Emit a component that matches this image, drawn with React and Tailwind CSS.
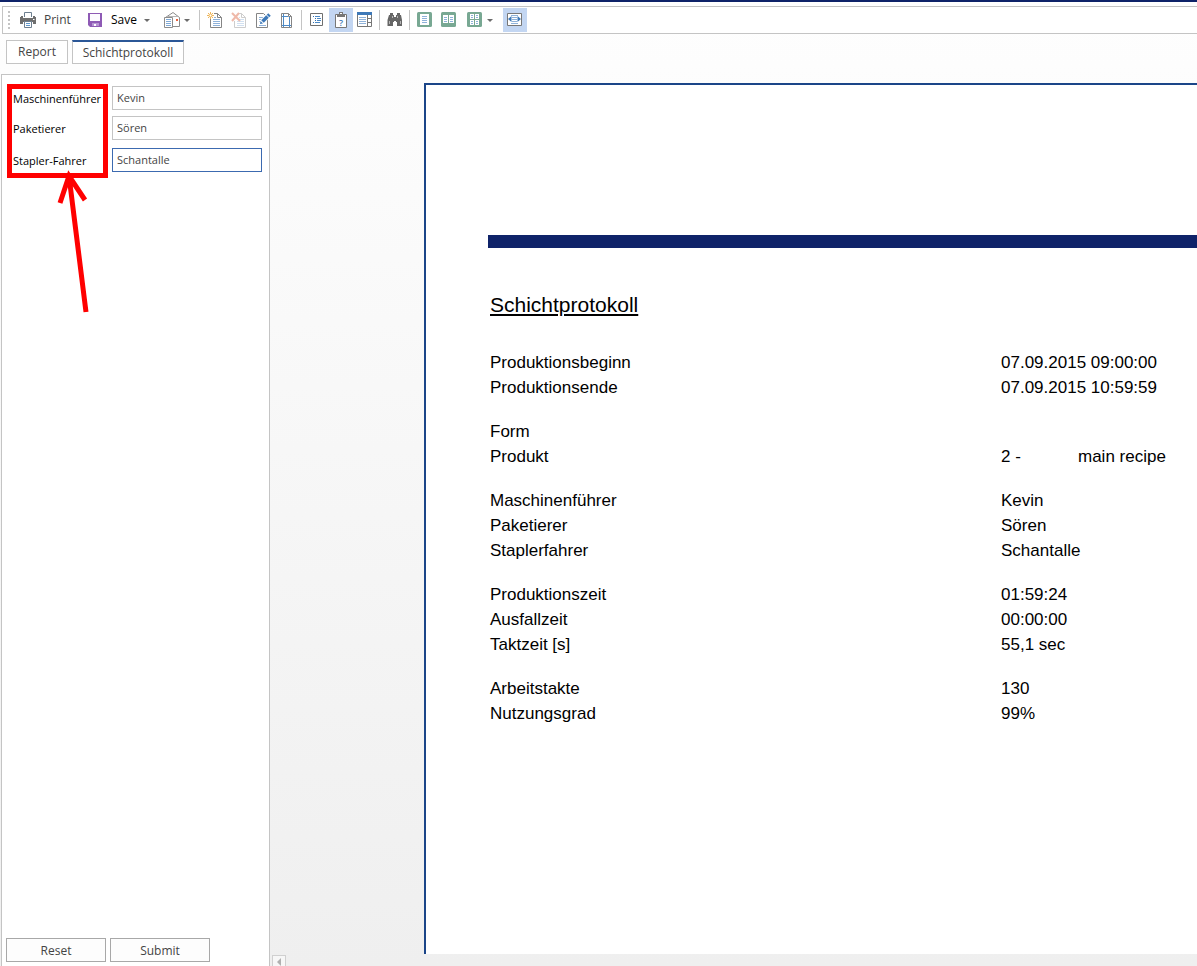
import { useState } from 'react';
import clsx from 'clsx';

const reportGroups = [
  [
    { label: 'Produktionsbeginn', value: '07.09.2015 09:00:00' },
    { label: 'Produktionsende', value: '07.09.2015 10:59:59' }
  ],
  [
    { label: 'Form', value: '' },
    { label: 'Produkt', value: '2 -', extra: 'main recipe' }
  ],
  [
    { label: 'Maschinenführer', value: 'Kevin' },
    { label: 'Paketierer', value: 'Sören' },
    { label: 'Staplerfahrer', value: 'Schantalle' }
  ],
  [
    { label: 'Produktionszeit', value: '01:59:24' },
    { label: 'Ausfallzeit', value: '00:00:00' },
    { label: 'Taktzeit [s]', value: '55,1 sec' }
  ],
  [
    { label: 'Arbeitstakte', value: '130' },
    { label: 'Nutzungsgrad', value: '99%' }
  ]
];

const initialValues = { operator: 'Kevin', packer: 'Sören', driver: 'Schantalle' };

/* ---------- Icons ---------- */

const Icon = ({ children, className }) => (
  <svg width="16" height="16" viewBox="0 0 16 16" fill="none" className={clsx('shrink-0', className)} aria-hidden="true">
    {children}
  </svg>
);

const PrintIcon = () => (
  <Icon>
    <path d="M4.5 5V.5h7V5" fill="#fff" stroke="#6d7f90" />
    <path d="M0 5h3v1.5h10V5h3v7h-3v-2H3v2H0z" fill="#6f6f6f" />
    <path d="M1 4h2v2H1zM13 4h2v2h-2zM1 11h2v1H1zM13 11h2v1h-2z" fill="#6f6f6f" />
    <path d="M0 6h16v4H0z" fill="#6f6f6f" />
    <path d="M13 7h1.5v1H13z" fill="#fff" />
    <path d="M4.5 9.5h7v6h-7z" fill="#fff" stroke="#6d7f90" />
    <path d="M6 11.5h4M6 13.5h4" stroke="#5f97cc" />
  </Icon>
);

const SaveIcon = () => (
  <Icon>
    <path d="M1 1h14v14H3l-2-2z" fill="#8e5ab5" />
    <path d="M3 2h10v7H3z" fill="#fdfbff" />
    <path d="M5 11h7v3H9v-2H7v2H5z" fill="#b795d3" />
    <path d="M7 12h2v2H7z" fill="#fdfbff" />
  </Icon>
);

const MailIcon = () => (
  <Icon>
    <path d="M1.5 5.500 9 .5l6.500 5v9h-7" fill="#fff" stroke="#8c8c8c" />
    <path d="M3.500 4.500h11" stroke="#b5b5b5" />
    <path d="M.5 5.500h8v10h-8z" fill="#fff" stroke="#8c8c8c" />
    <path d="M2 7.500h5M2 9.500h5M2 11.500h5M2 13.500h5" stroke="#7fa9d6" />
    <path d="M12 7h2v2h-2z" fill="#e8603c" />
  </Icon>
);

const Sheet = () => (
  <>
    <path d="M3.500 1.500h7l4 4v10h-11z" fill="#fff" stroke="#858585" />
    <path d="M10.500 1.500v4h4" stroke="#858585" />
    <path d="M6 5.500h3M6 7.500h7M6 9.500h7M6 11.500h7M6 13.500h7" stroke="#8fb2da" />
  </>
);

const NewIcon = () => (
  <Icon>
    <Sheet />
    <path d="M0 0h7v6H0z" fill="#fff" />
    <path d="M3.500 0v7M0 3.500h7M1 1l5 5M6 1 1 6" stroke="#efb75c" />
    <circle cx="3.500" cy="3.500" r="1.500" fill="#fff" stroke="#efb75c" />
  </Icon>
);

const DeleteIcon = () => (
  <Icon className="opacity-40">
    <Sheet />
    <path d="M0 0h8v9H0z" fill="#fff" />
    <path d="m1 1 8 8M8 1 1 9" stroke="#d9532c" strokeWidth="2" />
  </Icon>
);

const EditIcon = () => (
  <Icon>
    <path d="M1.500 1.500h7l4 4v10h-11z" fill="#fff" stroke="#858585" />
    <path d="M4 5.500h4M4 7.500h4M4 9.500h3M4 13.500h7" stroke="#8fb2da" />
    <path d="m6 11 9-9" stroke="#fff" strokeWidth="5" />
    <path d="m7.500 9.500 5-5" stroke="#3d78b8" strokeWidth="3.500" />
    <path d="m13 4 1.500-1.500" stroke="#3d78b8" strokeWidth="3.500" />
    <path d="m5 12 .5-3L8 11.500z" fill="#3d78b8" />
  </Icon>
);

const PageSetupIcon = () => (
  <Icon>
    <path d="M2.500 1.500h7l3 3v11h-10z" fill="#fff" stroke="#858585" />
    <path d="M9.500 1.500v3h3" stroke="#858585" />
    <path d="M4.500 2v13M10.500 5v10M3 4.500h6M3 13.500h9" stroke="#4d8ac6" />
  </Icon>
);

const BookmarksIcon = () => (
  <Icon>
    <path d="M1.500 1.500h12v12h-12z" fill="#fff" stroke="#6f6f6f" />
    <path d="M4 4.500h1M4 10.500h1M6 6.500h1M6 8.500h1" stroke="#2f6fb3" />
    <path d="M6 4.500h5M8 6.500h4M8 8.500h4M6 10.500h5" stroke="#4d8ac6" />
  </Icon>
);

const ParametersIcon = () => (
  <Icon>
    <path d="M2.500 2.500h11v13h-11z" fill="#fff" stroke="#777" />
    <path d="M4 2h2V0h4v2h2v3H4z" fill="#777" />
    <path d="M7 1h2v1H7z" fill="#fff" />
    <text x="8" y="14" textAnchor="middle" fontSize="9" fontWeight="600" fontFamily="Open Sans, sans-serif" fill="#3d78b8">?</text>
  </Icon>
);

const ThumbnailsIcon = () => (
  <Icon>
    <path d="M.5 2.500h14v12H.5z" fill="#fff" stroke="#777" />
    <path d="M0 0h15v3H0z" fill="#3d78b8" />
    <path d="M2 5.500h7M2 7.500h7M2 9.500h7M2 11.500h7" stroke="#8fb2da" />
    <path d="M10.500 3v11M10 6.500h5M10 10.500h5" stroke="#777" />
  </Icon>
);

const FindIcon = () => (
  <Icon>
    <path d="M3 1h3v2h1v2h2V3h1V1h3v2h1l1 5v6h-5v-4H9v-1H7v1H6v4H.5V8L2 3h1z" fill="#666" />
    <path d="M2.500 9v3M13.500 9v3M5.500 4v2M10.500 4v2" stroke="#b5b5b5" />
  </Icon>
);

const SinglePageIcon = () => (
  <Icon>
    <rect width="15" height="15" rx="1.500" fill="#78a893" />
    <path d="M3 2h9v11H3z" fill="#fff" />
    <path d="M5 4.500h5M5 6.500h5M5 8.500h5M5 10.500h5" stroke="#8fb2da" />
  </Icon>
);

const ContinuousIcon = () => (
  <Icon>
    <rect width="15" height="15" rx="1.500" fill="#78a893" />
    <path d="M2 3h5v8H2zM8 3h5v8H8z" fill="#fff" />
    <path d="M3 5.500h3M3 7.500h3M3 9.500h3M9 5.500h3M9 7.500h3M9 9.500h3" stroke="#8fb2da" />
  </Icon>
);

const MultiPageIcon = () => (
  <Icon>
    <rect width="15" height="15" rx="1.500" fill="#78a893" />
    <path d="M3 2h4v5H3zM8 2h4v5H8zM3 8h4v5H3zM8 8h4v5H8z" fill="#fff" />
    <path d="M4 3.500h2M4 5.500h2M9 3.500h2M9 5.500h2M4 9.500h2M4 11.500h2M9 9.500h2M9 11.500h2" stroke="#8fb2da" />
  </Icon>
);

const FitWidthIcon = () => (
  <Icon>
    <path d="M.5 1.500h14v12H.5z" fill="#fff" stroke="#777" />
    <path d="M4 3.500h7M5 5.500h5M5 7.500h5M5 9.500h5M4 11.500h7" stroke="#8fb2da" />
    <path d="M1 7 4.500 4v6zM14 7l-3.500-3v6z" fill="#3d78b8" />
  </Icon>
);

/* ---------- Toolbar ---------- */

const ToolButton = ({ label, active, onClick, children }) => (
  <button
    type="button"
    aria-label={label}
    title={label}
    aria-pressed={active}
    onClick={onClick}
    className={clsx('flex h-6 w-6 items-center pl-1', active && 'bg-[#c3d6f2]')}
  >
    {children}
  </button>
);

const CaretButton = ({ label }) => (
  <button type="button" aria-label={label} className="flex h-6 w-3.5 items-center justify-center">
    <svg width="6" height="3" viewBox="0 0 6 3" aria-hidden="true">
      <path d="M0 0h6L3 3z" fill="#6b6b6b" />
    </svg>
  </button>
);

const Separator = () => <span className="mr-[3px] ml-0.5 h-5 w-px shrink-0 bg-[#c4c4c4]" />;

const Toolbar = ({ showParameters, onToggleParameters }) => (
  <div className="bg-white pt-1 pl-0.5">
    <div className="flex h-7 items-center border-y border-l border-[#c4c4c4]">
      <span className="mr-1.5 ml-[5px] h-[18px] border-l-2 border-dotted border-[#c4c4c4]" />
      <button type="button" className="flex h-6 w-[67px] items-center gap-2 pl-1">
        <PrintIcon />
        Print
      </button>
      <button type="button" className="flex h-6 w-[57px] items-center gap-2 pl-1 text-black">
        <SaveIcon />
        Save
      </button>
      <CaretButton label="Save options" />
      <div className="mr-[3px] ml-1.5 flex">
        <button type="button" aria-label="Send E-Mail" className="flex h-6 w-5 items-center pl-1">
          <MailIcon />
        </button>
        <CaretButton label="Send options" />
      </div>
      <Separator />
      <ToolButton label="New page"><NewIcon /></ToolButton>
      <ToolButton label="Delete page"><DeleteIcon /></ToolButton>
      <ToolButton label="Edit page"><EditIcon /></ToolButton>
      <ToolButton label="Page setup"><PageSetupIcon /></ToolButton>
      <Separator />
      <ToolButton label="Bookmarks"><BookmarksIcon /></ToolButton>
      <ToolButton label="Parameters" active={showParameters} onClick={onToggleParameters}><ParametersIcon /></ToolButton>
      <ToolButton label="Thumbnails"><ThumbnailsIcon /></ToolButton>
      <Separator />
      <ToolButton label="Find"><FindIcon /></ToolButton>
      <Separator />
      <ToolButton label="Single page"><SinglePageIcon /></ToolButton>
      <ToolButton label="Continuous"><ContinuousIcon /></ToolButton>
      <div className="ml-0.5 flex">
        <button type="button" aria-label="Multiple pages" className="flex h-6 w-5 items-center pl-1">
          <MultiPageIcon />
        </button>
        <CaretButton label="Multiple pages options" />
      </div>
      <span className="w-1.5" />
      <ToolButton label="Page width" active><FitWidthIcon /></ToolButton>
    </div>
  </div>
);

/* ---------- Parameter panel ---------- */

const Field = ({ id, label, value, onChange, active }) => (
  <div className="flex h-6 items-center">
    <label htmlFor={id} className="w-[99px] shrink-0 pt-0.5 text-[11px] whitespace-nowrap text-black">{label}</label>
    <input
      id={id}
      type="text"
      value={value}
      onChange={(e) => onChange(id, e.target.value)}
      className={clsx(
        'h-6 w-[150px] border bg-white px-1 pb-0.5 text-[11px] outline-none focus:border-[#3c6ab0]',
        active ? 'border-[#3c6ab0]' : 'border-[#c4c4c4]'
      )}
    />
  </div>
);

// Red frame around the labels with an arrow pointing at it
const LabelMarker = () => (
  <svg
    width="102"
    height="230"
    viewBox="0 0 102 230"
    fill="none"
    stroke="#ff0000"
    strokeWidth="5"
    className="pointer-events-none absolute top-[9px] left-[5px]"
    aria-hidden="true"
  >
    <rect x="2.500" y="2.500" width="96" height="89" />
    <path d="m62 92 17 136M53 119l9-27 16 24" />
  </svg>
);

const ParameterPanel = () => {
  const [values, setValues] = useState(initialValues);

  const handleChange = (key, value) => {
    setValues(prev => ({ ...prev, [key]: value }));
  };

  return (
    <form
      className="relative ml-px flex w-[269px] shrink-0 flex-col border border-b-0 border-[#c4c4c4] bg-white"
      onSubmit={(e) => e.preventDefault()}
    >
      <div className="flex-1 pt-[11px] pl-[11px]">
        <Field id="operator" label="Maschinenführer" value={values.operator} onChange={handleChange} />
        <div className="mt-1.5">
          <Field id="packer" label="Paketierer" value={values.packer} onChange={handleChange} />
        </div>
        <div className="mt-2">
          <Field id="driver" label="Stapler-Fahrer" value={values.driver} onChange={handleChange} active />
        </div>
      </div>
      <LabelMarker />
      <div className="flex gap-1 pb-1 pl-1">
        <button type="button" onClick={() => setValues(initialValues)} className="h-6 w-[100px] border border-[#a8a8a8] bg-[#fdfdfd] pt-px">
          Reset
        </button>
        <button type="submit" className="h-6 w-[100px] border border-[#a8a8a8] bg-[#fdfdfd] pt-px">
          Submit
        </button>
      </div>
    </form>
  );
};

/* ---------- Report page ---------- */

const ReportPage = () => (
  <article className="mb-3 ml-[152px] min-w-0 flex-1 overflow-hidden border-t-2 border-l-2 border-[#1b4588] bg-white pt-[150px] pl-[62px] font-['Liberation_Sans',Arial,sans-serif] text-black">
    <div className="h-[13px] bg-[#0f2369]" />
    <div className="pl-0.5">
      <h1 className="mt-11 text-[21px] leading-[26px] underline underline-offset-2">Schichtprotokoll</h1>
      <table className="mt-8 w-full table-fixed text-left text-[17px] leading-[25px]">
        <colgroup>
          <col className="w-[511px]" />
          <col />
        </colgroup>
        {reportGroups.map((group, groupIndex) => (
          <tbody key={groupIndex}>
            {group.map((row, index) => {
              const spacing = index === 0 && groupIndex > 0 ? 'pt-[19px]' : 'pt-0';
              return (
                <tr key={row.label}>
                  <th scope="row" className={clsx('px-0 pb-0 font-normal', spacing)}>{row.label}</th>
                  <td className={clsx('px-0 pb-0 whitespace-nowrap', spacing)}>
                    {row.extra ? (
                      <span className="flex">
                        <span className="w-[77px]">{row.value}</span>
                        <span>{row.extra}</span>
                      </span>
                    ) : row.value}
                  </td>
                </tr>
              );
            })}
          </tbody>
        ))}
      </table>
    </div>
  </article>
);

const App = () => {
  const [tab, setTab] = useState('Schichtprotokoll');
  const [showParameters, setShowParameters] = useState(true);

  return (
    <div className="flex min-h-screen flex-col overflow-hidden border-t-2 border-[#0f2369] bg-linear-to-b from-[#fefefe] to-[#efefef] font-['Open_Sans','Noto_Sans',sans-serif] text-xs text-[#444444]">
      <Toolbar showParameters={showParameters} onToggleParameters={() => setShowParameters(!showParameters)} />

      <nav className="mt-1.5 mb-2.5 flex gap-1 pl-1.5">
        <button
          type="button"
          onClick={() => setTab('Report')}
          className={clsx('h-6 w-[62px] border border-[#c4c4c4] bg-white', tab === 'Report' && 'border-t-2 border-t-[#2b5797]')}
        >
          Report
        </button>
        <button
          type="button"
          onClick={() => setTab('Schichtprotokoll')}
          className={clsx('h-6 w-28 border border-[#c4c4c4] bg-white', tab === 'Schichtprotokoll' && 'border-t-2 border-t-[#2b5797]')}
        >
          Schichtprotokoll
        </button>
      </nav>

      <div className="flex flex-1">
        {showParameters && <ParameterPanel />}
        <main className="relative flex min-w-0 flex-1 pt-[9px] pl-0.5">
          <ReportPage />
          <button
            type="button"
            aria-label="Scroll left"
            className="absolute bottom-0 left-0.5 flex h-[11px] w-3.5 items-end justify-center border border-b-0 border-[#d0d0d0] bg-[#f7f7f7]"
          >
            <svg width="4" height="8" viewBox="0 0 4 8" aria-hidden="true">
              <path d="M4 0v8L0 4z" fill="#b0b0b0" />
            </svg>
          </button>
        </main>
      </div>
    </div>
  );
};

export default App;
